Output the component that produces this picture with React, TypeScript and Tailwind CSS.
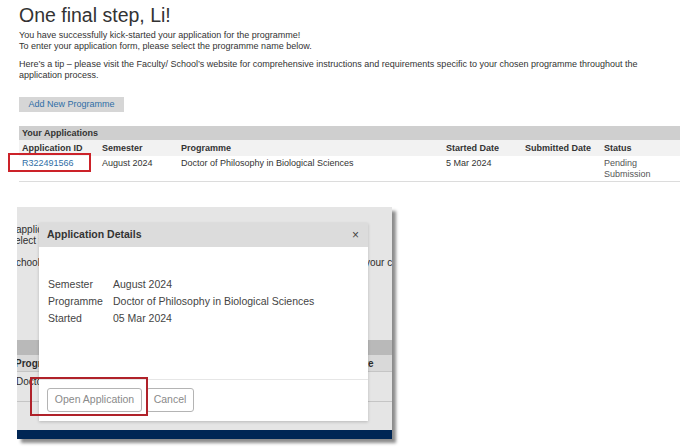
const font = { fontFamily: '"Liberation Sans", Arial, sans-serif' };

function TopPage() {
  return (
    <div className="relative">
      <div className="px-[19px] pt-[4px] text-[#333]">
        <h1 className="text-[19.5px] leading-[22px] font-normal">One final step, Li!</h1>
        <div className="mt-[4px] text-[9px] leading-[11px]">
          <p>You have successfully kick-started your application for the programme!</p>
          <p>To enter your application form, please select the programme name below.</p>
        </div>
        <p className="mt-[7px] text-[9px] leading-[11px] pr-[20px]">
          Here’s a tip – please visit the Faculty/ School’s website for comprehensive instructions and requirements specific to your chosen programme throughout the application process.
        </p>
        <button
          type="button"
          className="block mt-[16px] h-[15px] w-[105px] bg-[#d6d6d6] text-[9px] leading-[15px] text-[#2f6ea6] text-center"
        >
          Add New Programme
        </button>

        <div className="mt-[14px] w-[661px] text-[9px]">
          <div className="h-[14px] bg-[#cfcfcf] px-[3px] font-bold leading-[14px]">Your Applications</div>
          <div className="grid grid-cols-[80px_79px_265px_79px_79px_1fr] h-[16px] bg-[#f2f2f2] font-bold leading-[16px]">
            <span className="pl-[3px]">Application ID</span>
            <span className="pl-[3px]">Semester</span>
            <span className="pl-[3px]">Programme</span>
            <span className="pl-[3px]">Started Date</span>
            <span className="pl-[3px]">Submitted Date</span>
            <span className="pl-[3px]">Status</span>
          </div>
          <div className="grid grid-cols-[80px_79px_265px_79px_79px_1fr] h-[26px] border-b border-[#dcdcdc] pt-[2px] leading-[11px]">
            <span className="pl-[3px] text-[#2f6ea6]">R322491566</span>
            <span className="pl-[3px]">August 2024</span>
            <span className="pl-[3px]">Doctor of Philosophy in Biological Sciences</span>
            <span className="pl-[3px]">5 Mar 2024</span>
            <span className="pl-[3px]"></span>
            <span className="pl-[3px] text-[#555]">
              Pending
              <br />
              Submission
            </span>
          </div>
        </div>
      </div>
      <div className="absolute left-[8px] top-[153px] w-[83px] h-[19px] border-2 border-[#cc2229]" />
    </div>
  );
}

function DialogShot() {
  return (
    <div className="relative ml-[17px] mt-[25px] w-[375px] h-[232px] overflow-hidden bg-white shadow-[4px_4px_3px_rgba(0,0,0,0.45)] text-[#333]">
      {/* page behind the modal */}
      <div className="flex flex-col h-full text-[10px] leading-[11px]">
        <p className="mt-[17px] -ml-[1px] whitespace-nowrap">application for the programme!</p>
        <p className="-ml-[2px] whitespace-nowrap">elect the programme name below.</p>
        <div className="mt-[11px] grid grid-cols-[349px_1fr] whitespace-nowrap -ml-[1px]">
          <span>chool’s website</span>
          <span>your chosen</span>
        </div>
        <div className="mt-[72px] h-[15px] bg-[#cfcfcf]" />
        <div className="grid grid-cols-[335px_1fr] h-[17px] bg-[#f2f2f2] border-b border-[#dcdcdc] font-bold leading-[17px] whitespace-nowrap">
          <span className="-ml-[2px]">Programme</span>
          <span>Date</span>
        </div>
        <div className="h-[30px] border-b border-[#dcdcdc] pt-[4px] whitespace-nowrap">
          <span className="-ml-[1px]">Doctor</span>
        </div>
        <div className="mt-auto h-[9px] bg-[#002b5e]" />
      </div>
      <div className="absolute inset-0 bg-black/[0.1]" />

      {/* modal */}
      <div className="absolute left-[22px] top-[16px] w-[329px] h-[198px] bg-white flex flex-col shadow-[0_1px_3px_rgba(0,0,0,0.2)]">
        <div className="h-[24px] bg-[#dcdcdc] flex items-center justify-between pl-[8px] pr-[9px]">
          <span className="text-[10.5px] font-bold text-[#333]">Application Details</span>
          <span className="text-[12px] text-[#444] leading-none">×</span>
        </div>
        <div className="flex-1 pl-[9px] pt-[29px] text-[10.5px] leading-[17px] text-[#444]">
          <div className="grid grid-cols-[65px_1fr]">
            <span>Semester</span>
            <span>August 2024</span>
            <span>Programme</span>
            <span>Doctor of Philosophy in Biological Sciences</span>
            <span>Started</span>
            <span>05 Mar 2024</span>
          </div>
        </div>
        <div className="h-[42px] border-t border-[#e6e6e6] flex items-start gap-[4px] pl-[8px] pt-[8px]">
          <button
            type="button"
            className="h-[24px] w-[95px] rounded-[3px] border border-[#b4b4b4] text-[10.5px] text-[#8a8a8a]"
          >
            Open Application
          </button>
          <button
            type="button"
            className="h-[24px] w-[48px] rounded-[3px] border border-[#b4b4b4] text-[10.5px] text-[#8a8a8a]"
          >
            Cancel
          </button>
        </div>
      </div>
      <div className="absolute left-[13px] top-[170px] w-[118px] h-[39px] border-2 border-[#b0222a]" />
    </div>
  );
}

export default function App() {
  return (
    <div className="w-[683px] h-[447px] bg-white overflow-hidden" style={font}>
      <TopPage />
      <DialogShot />
    </div>
  );
}
